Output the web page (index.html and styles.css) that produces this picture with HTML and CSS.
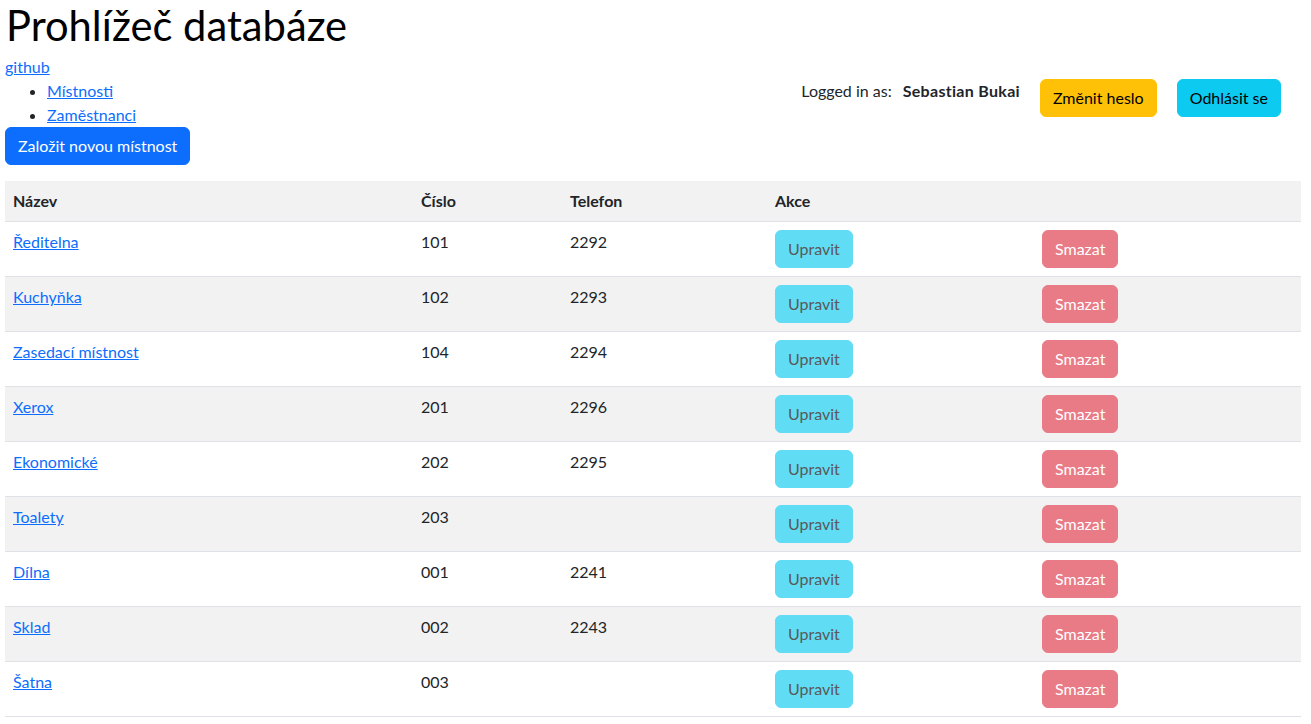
FILE: index.html
```html
<!DOCTYPE html>
<html lang="cs">
<head>
<meta charset="utf-8">
<title>Prohlížeč databáze</title>
<link rel="stylesheet" href="styles.css">
</head>
<body>
<div class="page">
  <h1 class="title">Prohlížeč databáze</h1>
  <div class="gh"><a href="#">github</a></div>
  <div class="topbar">
    <ul class="menu">
      <li><a href="#">Místnosti</a></li>
      <li><a href="#">Zaměstnanci</a></li>
    </ul>
    <div class="user">
      <span class="user-label">Logged in as:</span>
      <span class="user-name">Sebastian Bukai</span>
      <a href="#" class="btn btn-warning">Změnit heslo</a>
      <a href="#" class="btn btn-info">Odhlásit se</a>
    </div>
  </div>
  <a href="#" class="btn btn-primary">Založit novou místnost</a>
  <table class="table">
    <colgroup>
      <col class="c1"><col class="c2"><col class="c3"><col class="c4"><col class="c5">
    </colgroup>
    <tbody>
      <tr class="head"><th>Název</th><th>Číslo</th><th>Telefon</th><th>Akce</th><th></th></tr>
      <tr><td><a href="#">Ředitelna</a></td><td>101</td><td>2292</td><td><span class="btn btn-edit">Upravit</span></td><td><span class="btn btn-del">Smazat</span></td></tr>
      <tr><td><a href="#">Kuchyňka</a></td><td>102</td><td>2293</td><td><span class="btn btn-edit">Upravit</span></td><td><span class="btn btn-del">Smazat</span></td></tr>
      <tr><td><a href="#">Zasedací místnost</a></td><td>104</td><td>2294</td><td><span class="btn btn-edit">Upravit</span></td><td><span class="btn btn-del">Smazat</span></td></tr>
      <tr><td><a href="#">Xerox</a></td><td>201</td><td>2296</td><td><span class="btn btn-edit">Upravit</span></td><td><span class="btn btn-del">Smazat</span></td></tr>
      <tr><td><a href="#">Ekonomické</a></td><td>202</td><td>2295</td><td><span class="btn btn-edit">Upravit</span></td><td><span class="btn btn-del">Smazat</span></td></tr>
      <tr><td><a href="#">Toalety</a></td><td>203</td><td></td><td><span class="btn btn-edit">Upravit</span></td><td><span class="btn btn-del">Smazat</span></td></tr>
      <tr><td><a href="#">Dílna</a></td><td>001</td><td>2241</td><td><span class="btn btn-edit">Upravit</span></td><td><span class="btn btn-del">Smazat</span></td></tr>
      <tr><td><a href="#">Sklad</a></td><td>002</td><td>2243</td><td><span class="btn btn-edit">Upravit</span></td><td><span class="btn btn-del">Smazat</span></td></tr>
      <tr><td><a href="#">Šatna</a></td><td>003</td><td></td><td><span class="btn btn-edit">Upravit</span></td><td><span class="btn btn-del">Smazat</span></td></tr>
    </tbody>
  </table>
</div>
</body>
</html>
```

FILE: styles.css
```css
* { box-sizing: border-box; }
html, body { margin: 0; padding: 0; }
body {
  font-family: "Lato", "Noto Sans", sans-serif;
  font-size: 16px;
  line-height: 1.5;
  color: #212529;
  background: #fff;
}
.page {
  width: 1301px;
  padding: 0 0 0 5px;
}
a { color: #0d6efd; text-decoration: underline; }
.title {
  margin: 0 0 8px 1px;
  font-size: 41.7px;
  font-weight: 400;
  line-height: 1.2;
  color: #000;
}
.gh { line-height: 24px; margin-top: -3px; }
.topbar {
  display: flex;
  justify-content: space-between;
  align-items: flex-start;
}
.menu {
  margin: 0;
  padding-left: 42px;
}
.user {
  display: flex;
  align-items: flex-start;
  margin-right: 20px;
}
.user-label { line-height: 24px; margin-right: 11px; }
.user-name { line-height: 24px; font-weight: 700; letter-spacing: 0.3px; }
.btn {
  display: inline-block;
  padding: 6px 12px;
  font-size: 16px;
  line-height: 24px;
  border-radius: 6px;
  text-decoration: none;
  border: 1px solid transparent;
  text-align: center;
}
.user .btn { margin-left: 20px; }
.btn-warning { background: #ffc107; border-color: #ffc107; color: #000; }
.btn-info { background: #0dcaf0; border-color: #0dcaf0; color: #000; }
.btn-primary { background: #0d6efd; border-color: #0d6efd; color: #fff; }
.btn-edit { background: #61dcf5; border-color: #61dcf5; color: #595959; }
.btn-del { background: #e87b86; border-color: #e87b86; color: #fff; }
.table {
  margin-top: 16px;
  width: 1296px;
  border-collapse: collapse;
  table-layout: fixed;
}
.c1 { width: 408px; }
.c2 { width: 149px; }
.c3 { width: 205px; }
.c4 { width: 267px; }
.c5 { width: 267px; }
.table th, .table td {
  padding: 8px;
  text-align: left;
  vertical-align: top;
  border-bottom: 1px solid #dee2e6;
}
.table th { font-weight: 700; }
.table tr:nth-child(odd) { background: #f2f2f2; }
```
